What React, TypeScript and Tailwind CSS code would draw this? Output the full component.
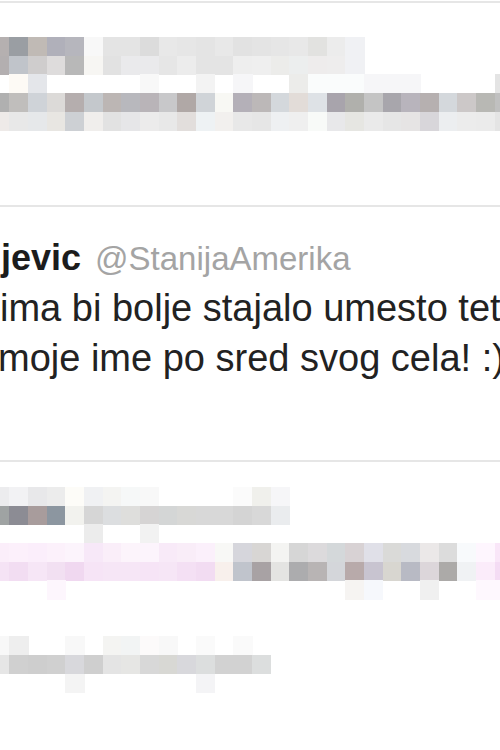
type Row = string[]

const CELL = 56 / 3

// censored (pixelated) tweets, one colour per block, '' = white
const topBlock: Row[] = [
  ['#b5b0b0', '#9a9ea3', '#c0bab5', '#b0b0ba', '#b6b6bd', '#f8f8f8', '#e4e4e4', '#e4e4e4', '#dcdcdc', '#e8e8e8', '#e6e6e6', '#e4e4e4', '#e8e8e8', '#e2e2e2', '#e4e4e4', '#e6e6e6', '#e8e8e8', '#e2e2e0', '#ececec', '#f0f1f4'],
  ['#b3afb0', '#c0c4ca', '#cfcdcd', '#dedcdc', '#b8b8b8', '#f7f6f3', '#e2e2e2', '#eaeaec', '#eaeaec', '#e6e6e6', '#ececec', '#e4e4e4', '#e4e4e4', '#eeeeee', '#efefef', '#ececea', '#eceeee', '#eeecec', '#eeeded', '#f0f1f4'],
  ['', '#fdfaf5', '#e4e6ea', '', '', '', '', '', '#f8f8f8', '', '', '#f3f3f3', '', '#f6f6f8', '', '', '#ececea', '#fafcfc', '#fafcfc', '#fafcfc', '#f6f6f8', '#f6f6f8', '#f6f6f8', '', '', '', '', '#e4e4e4'],
  ['#b0b0b0', '#c0bebc', '#cfd3d8', '#dcdad8', '#b5aeae', '#c4c8cc', '#bcb6b4', '#b8b8bd', '#b9b4b8', '#c8c8ca', '#b0a8a6', '#d0d4d8', '#f8f8f4', '#b4b0b8', '#bcb8b8', '#d4d8dc', '#e2dcd8', '#dee2e6', '#a8a4ac', '#b0b0ac', '#c4c4c4', '#a8a6ac', '#b8b4bc', '#b6b0b0', '#d4d8dc', '#ccc8c8', '#b8b8b4', '#c0c0c0'],
  ['#eeeae8', '#e8e8e8', '#e6e8ea', '#e8e6e2', '#cdd0d4', '#f0eeec', '#e2e2e2', '#e6e6e8', '#ecebeb', '#e8e8e8', '#e2dedc', '#eef2f4', '#f2f0ee', '#e8e8e8', '#e6e6e6', '#eef0f2', '#efefef', '#f8faf8', '#e8e8ea', '#e6e6e2', '#eaeaea', '#e6e6e6', '#e6e4e4', '#d8d6da', '#eceef0', '#ececec', '#ebebeb', '#e4e4e4'],
]

const bottomBlock: Row[] = [
  ['#ececee', '#f2f2f4', '#e8e8ea', '#ececec', '#fdfcf8', '#f0f1f3', '#f4f4f2', '#f6f8f8', '#f8f8f8', '', '', '', '', '#fbfbfb', '#f0f0ec', '#f6f6f8'],
  ['#9fa3a3', '#8c8c94', '#a89c9c', '#8c96a0', '#f2f2ee', '#d6d6d6', '#dcdee0', '#dededc', '#d6d4d4', '#d4d6d6', '#d8d8d6', '#d8d8d8', '#d8d8d8', '#d4d4d4', '#d8d8d8', '#eaecee'],
  ['', '', '', '', '', '#ececec', '', '', '#f2f2f2'],
  ['#fbeefa', '#fcf0fb', '#fbeefb', '#fcf1fb', '#fcf4fc', '#f7e8f8', '#faeef9', '#fcf4fb', '#fcf4fc', '#f8eaf8', '#f9edf8', '#fbf0fb', '#f8f8f6', '#d6d6dc', '#d8d6d4', '#f4f4f2', '#d6d6d6', '#dcdadc', '#d4d8da', '#d8d2d4', '#e0e0e8', '#dadad8', '#d8dade', '#ebe8e8', '#dcdcdc', '#f8fafc', '#fef6fe', '#f9e6f8'],
  ['#f5e3f5', '#f2ddf2', '#f6e6f6', '#f2e0f2', '#f0d8f0', '#f6e4f6', '#f6e6f6', '#f6e6f6', '#f6e4f6', '#f6e6f6', '#f4e0f4', '#f2dcf2', '#f8f0ec', '#c0c4cc', '#a8a2a4', '#e4e4e2', '#acacae', '#b8b4b4', '#d4d6da', '#b8aaaa', '#c8c4d0', '#d8d6d0', '#b8bac4', '#dcd6da', '#acaaa8', '#f0f2f4', '#fbecfa', '#f4dcf4'],
  ['', '', '', '#fdf6fd', '', '', '', '', '', '', '', '', '', '', '', '', '', '', '', '#f6f4f2', '#f6f8fc', '', '', '#f0f0f0', '', '', '#fef8fe', '#fef8fe'],
  [],
  [],
  ['#f8f8f8', '#eeeeee', '', '', '#f8f8f8', '', '#f4f4f2', '#f2f4f4', '#fcfafa', '#f8f8f8', '', '#fafafa', '', '#fafafa'],
  ['#e6e6e6', '#d0d0d0', '#cecece', '#d0d0d0', '#d8d8dc', '#cfcfcf', '#e4e4e4', '#e6e6e4', '#d8d8d8', '#d8d8d4', '#d8d8dc', '#dcdede', '#d2d2d2', '#d2d2d2', '#dcdede'],
  ['', '', '', '', '#f4f4f4', '', '', '', '', '', '', '#f4f4f6'],
]

function Mosaic({ rows }: { rows: Row[] }) {
  return (
    <svg width={500} height={rows.length * CELL} className="block" shapeRendering="crispEdges">
      {rows.map((row, r) =>
        row.map((c, i) =>
          c ? (
            <rect
              key={`${r}-${i}`}
              x={-CELL / 2 + i * CELL}
              y={r * CELL}
              width={CELL + 0.5}
              height={CELL + 0.5}
              fill={c}
            />
          ) : null
        )
      )}
    </svg>
  )
}

function App() {
  return (
    <div className="h-[750px] w-[500px] overflow-hidden bg-white font-['Liberation_Sans',Arial,sans-serif]">
      <div className="h-px" />

      {/* blurred tweet above */}
      <div className="h-[204px] border-t-2 border-[#e6e6e6] pt-[34.33px]">
        <Mosaic rows={topBlock} />
      </div>

      {/* the readable tweet */}
      <div className="h-[255px] border-t-2 border-[#e6e6e6] pt-[31px] whitespace-nowrap">
        <div className="flex items-baseline leading-[40px]">
          <span className="ml-px text-[36px] font-bold text-[#1c1c1c]">jevic</span>
          <span className="ml-[14px] text-[33px] text-[#a4a4a4]">@StanijaAmerika</span>
        </div>
        <p className="mt-[4px] text-[38px] leading-[50px] text-[#222]">
          ima bi bolje stajalo umesto tetovaže
        </p>
        <p className="-ml-[2px] text-[38px] leading-[50px] text-[#222]">
          moje ime po sred svog cela! :)
        </p>
      </div>

      {/* blurred tweet below */}
      <div className="border-t-2 border-[#e6e6e6] pt-[25.33px]">
        <Mosaic rows={bottomBlock} />
      </div>
    </div>
  )
}

export default App
